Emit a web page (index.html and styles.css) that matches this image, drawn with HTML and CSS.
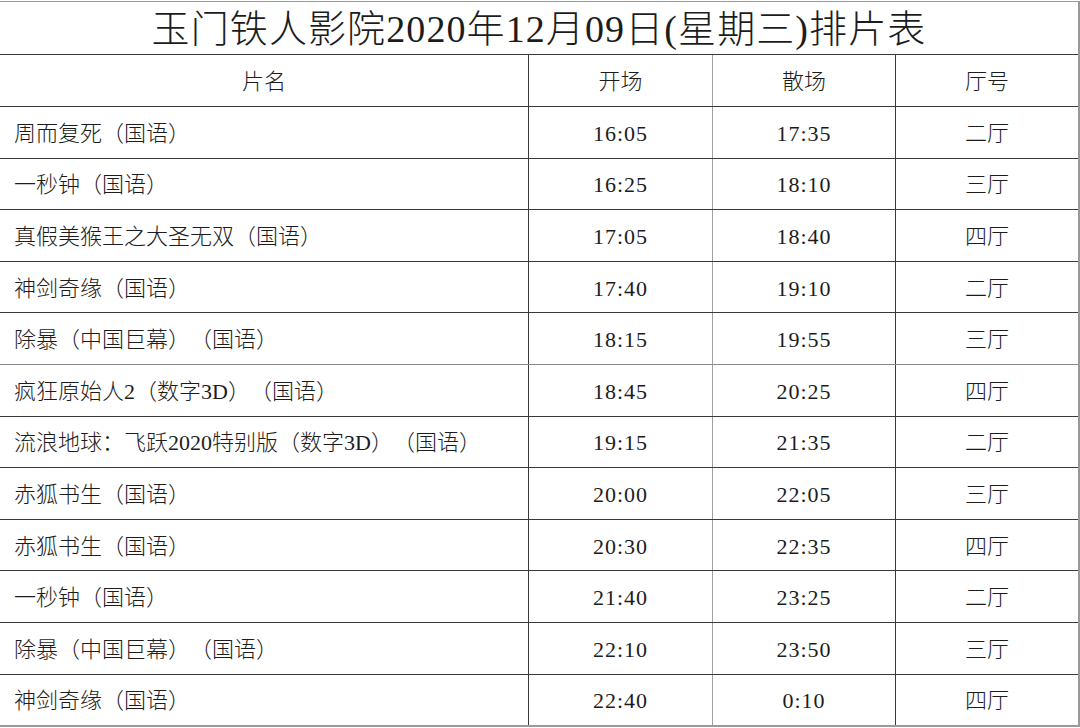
FILE: index.html
```html
<!DOCTYPE html>
<html lang="zh-CN">
<head>
<meta charset="utf-8">
<title>排片表</title>
<link rel="stylesheet" href="styles.css">
</head>
<body>
<div class="sheet">
  <div class="title">玉门铁人影院2020年12月09日(星期三)排片表</div>
  <div class="row head">
    <div class="cell c1 center">片名</div>
    <div class="cell c2">开场</div>
    <div class="cell c3">散场</div>
    <div class="cell c4">厅号</div>
  </div>
  <div class="row">
    <div class="cell c1">周而复死（国语）</div>
    <div class="cell c2 time">16:05</div>
    <div class="cell c3 time">17:35</div>
    <div class="cell c4">二厅</div>
  </div>
  <div class="row">
    <div class="cell c1">一秒钟（国语）</div>
    <div class="cell c2 time">16:25</div>
    <div class="cell c3 time">18:10</div>
    <div class="cell c4">三厅</div>
  </div>
  <div class="row">
    <div class="cell c1">真假美猴王之大圣无双（国语）</div>
    <div class="cell c2 time">17:05</div>
    <div class="cell c3 time">18:40</div>
    <div class="cell c4">四厅</div>
  </div>
  <div class="row">
    <div class="cell c1">神剑奇缘（国语）</div>
    <div class="cell c2 time">17:40</div>
    <div class="cell c3 time">19:10</div>
    <div class="cell c4">二厅</div>
  </div>
  <div class="row">
    <div class="cell c1">除暴（中国巨幕）（国语）</div>
    <div class="cell c2 time">18:15</div>
    <div class="cell c3 time">19:55</div>
    <div class="cell c4">三厅</div>
  </div>
  <div class="row gray">
    <div class="cell c1">疯狂原始人2（数字3D）（国语）</div>
    <div class="cell c2 time">18:45</div>
    <div class="cell c3 time">20:25</div>
    <div class="cell c4">四厅</div>
  </div>
  <div class="row">
    <div class="cell c1">流浪地球：飞跃2020特别版（数字3D）（国语）</div>
    <div class="cell c2 time">19:15</div>
    <div class="cell c3 time">21:35</div>
    <div class="cell c4">二厅</div>
  </div>
  <div class="row">
    <div class="cell c1">赤狐书生（国语）</div>
    <div class="cell c2 time">20:00</div>
    <div class="cell c3 time">22:05</div>
    <div class="cell c4">三厅</div>
  </div>
  <div class="row">
    <div class="cell c1">赤狐书生（国语）</div>
    <div class="cell c2 time">20:30</div>
    <div class="cell c3 time">22:35</div>
    <div class="cell c4">四厅</div>
  </div>
  <div class="row">
    <div class="cell c1">一秒钟（国语）</div>
    <div class="cell c2 time">21:40</div>
    <div class="cell c3 time">23:25</div>
    <div class="cell c4">二厅</div>
  </div>
  <div class="row">
    <div class="cell c1">除暴（中国巨幕）（国语）</div>
    <div class="cell c2 time">22:10</div>
    <div class="cell c3 time">23:50</div>
    <div class="cell c4">三厅</div>
  </div>
  <div class="row">
    <div class="cell c1">神剑奇缘（国语）</div>
    <div class="cell c2 time">22:40</div>
    <div class="cell c3 time">0:10</div>
    <div class="cell c4">四厅</div>
  </div>
</div>
</body>
</html>
```

FILE: styles.css
```css
html, body {
  margin: 0;
  padding: 0;
  background: #ffffff;
}

body {
  font-family: "Liberation Serif", "Noto Sans CJK SC", serif;
  color: #1c1c1c;
  text-spacing-trim: space-all;
}

.sheet {
  box-sizing: border-box;
  width: 1080px;
  margin-top: 1px;
  border-top: 1px solid #9a9a9a;
  border-right: 2px solid #9a9a9a;
  border-bottom: 2px solid #9a9a9a;
}

.title {
  height: 52px;
  display: flex;
  align-items: center;
  justify-content: center;
  font-size: 38px;
  font-weight: 300;
  letter-spacing: 1.1px;
  line-height: 1;
  padding-top: 1px;
  box-sizing: border-box;
}

.row {
  display: grid;
  grid-template-columns: 528px 184px 183px 183px;
  height: 51.6px;
  box-sizing: border-box;
  border-top: 1px solid #3a3a3a;
}

.row.head {
  height: 52px;
}

.row.gray {
  border-top: 1px solid #8a8a8a;
}

.cell {
  display: flex;
  align-items: center;
  justify-content: center;
  font-size: 22px;
  font-weight: 300;
  line-height: 1;
  padding-top: 3px;
  box-sizing: border-box;
  white-space: nowrap;
}

.c1 {
  justify-content: flex-start;
  padding-left: 14px;
}

.c1.center {
  justify-content: center;
  padding-left: 0;
}

.c2 {
  border-left: 1px solid #3a3a3a;
}

.c3 {
  border-left: 1px solid #a0a0a0;
}

.c4 {
  border-left: 1px solid #3a3a3a;
}

.time {
  letter-spacing: 1px;
}
```
